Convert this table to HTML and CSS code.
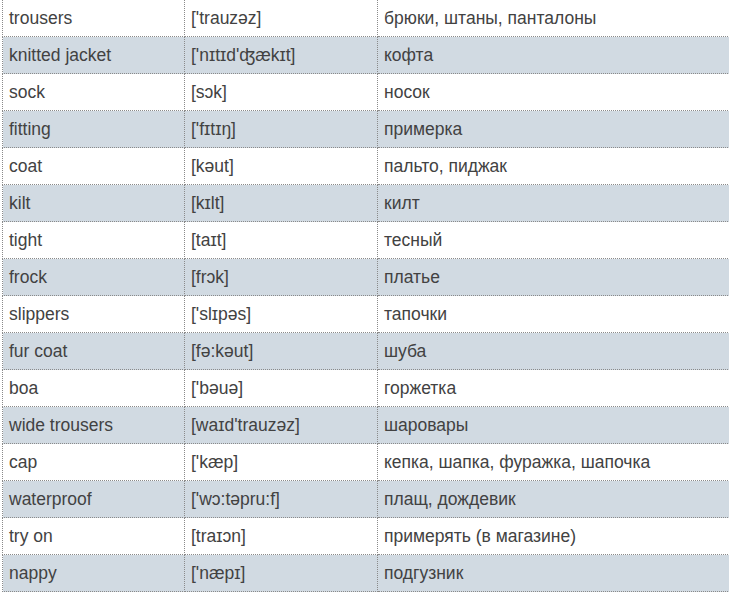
FILE: index.html
```html
<!DOCTYPE html>
<html>
<head>
<meta charset="utf-8">
<link rel="stylesheet" href="styles.css">
</head>
<body>
<table class="vocab">
<colgroup><col class="c1"><col class="c2"><col class="c3"></colgroup>
<tbody>
<tr><td>trousers</td><td>['trauzəz]</td><td>брюки, штаны, панталоны</td></tr>
<tr class="alt"><td>knitted jacket</td><td>['nɪtɪd'ʤækɪt]</td><td>кофта</td></tr>
<tr><td>sock</td><td>[sɔk]</td><td>носок</td></tr>
<tr class="alt"><td>fitting</td><td>['fɪtɪŋ]</td><td>примерка</td></tr>
<tr><td>coat</td><td>[kəut]</td><td>пальто, пиджак</td></tr>
<tr class="alt"><td>kilt</td><td>[kɪlt]</td><td>килт</td></tr>
<tr><td>tight</td><td>[taɪt]</td><td>тесный</td></tr>
<tr class="alt"><td>frock</td><td>[frɔk]</td><td>платье</td></tr>
<tr><td>slippers</td><td>['slɪpəs]</td><td>тапочки</td></tr>
<tr class="alt"><td>fur coat</td><td>[fə:kəut]</td><td>шуба</td></tr>
<tr><td>boa</td><td>['bəuə]</td><td>горжетка</td></tr>
<tr class="alt"><td>wide trousers</td><td>[waɪd'trauzəz]</td><td>шаровары</td></tr>
<tr><td>cap</td><td>['kæp]</td><td>кепка, шапка, фуражка, шапочка</td></tr>
<tr class="alt"><td>waterproof</td><td>['wɔ:təpru:f]</td><td>плащ, дождевик</td></tr>
<tr><td>try on</td><td>[traɪɔn]</td><td>примерять (в магазине)</td></tr>
<tr class="alt"><td>nappy</td><td>['næpɪ]</td><td>подгузник</td></tr>
</tbody>
</table>
</body>
</html>
```
FILE: styles.css
```css
html, body {
  margin: 0;
  padding: 0;
  background: #ffffff;
}
.vocab {
  border-collapse: collapse;
  table-layout: fixed;
  width: 727px;
  margin: -1px 0 0 2px;
  font-family: "Liberation Sans", Arial, sans-serif;
  font-size: 17.5px;
  color: #424242;
}
.c1 { width: 182px; }
.c2 { width: 193px; }
.c3 { width: 352px; }
.vocab td {
  border: 1px dotted #8a8a8a;
  height: 37px;
  padding: 0 6px;
  box-sizing: border-box;
  vertical-align: middle;
  white-space: nowrap;
}
.vocab tr.alt td {
  background: #d1dae2;
}
```
